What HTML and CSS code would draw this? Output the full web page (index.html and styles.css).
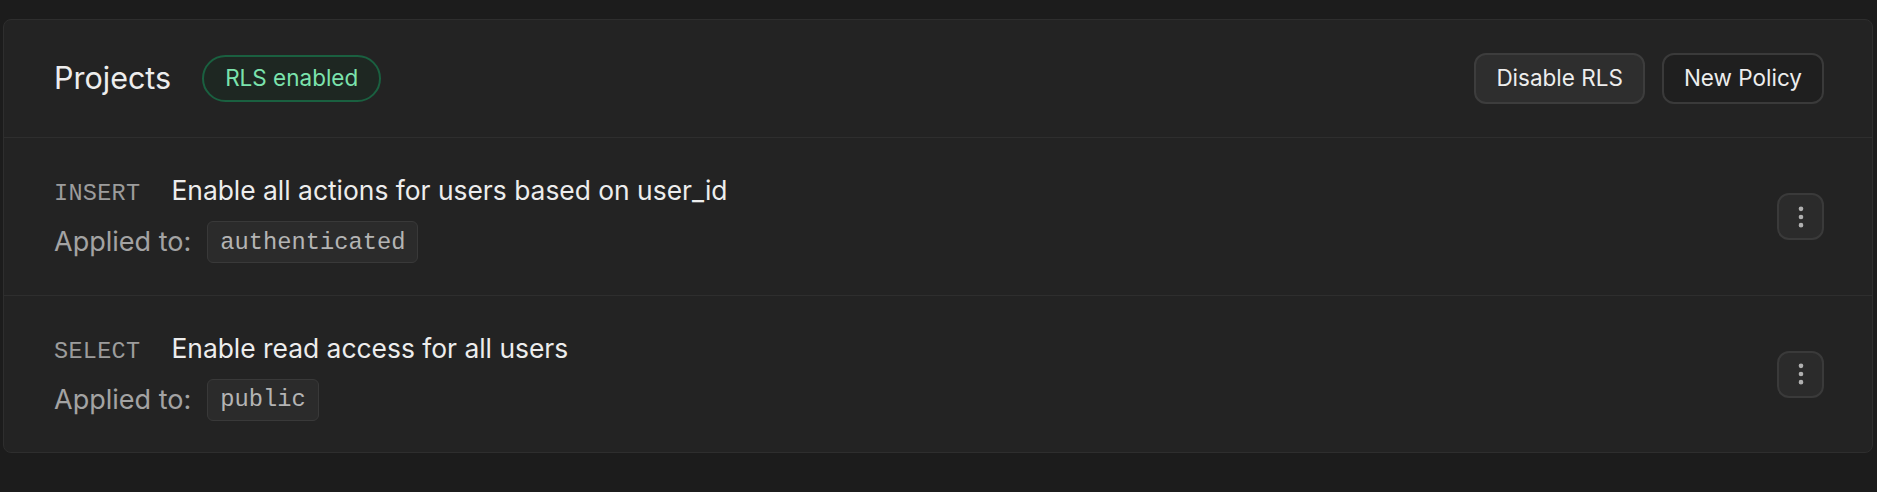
FILE: index.html
```html
<!DOCTYPE html>
<html lang="en">
<head>
<meta charset="utf-8">
<title>Projects policies</title>
<link rel="stylesheet" href="styles.css">
</head>
<body>
<section class="card">
  <header class="card-header">
    <div class="header-left">
      <h2 class="title">Projects</h2>
      <span class="badge">RLS enabled</span>
    </div>
    <div class="header-actions">
      <button class="btn btn-secondary">Disable RLS</button>
      <button class="btn btn-outline">New Policy</button>
    </div>
  </header>

  <div class="policy-row">
    <div class="policy-info">
      <div class="policy-line">
        <span class="method">INSERT</span>
        <span class="policy-name">Enable all actions for users based on user_id</span>
      </div>
      <div class="applied-line">
        <span class="applied-label">Applied to:</span>
        <code class="role-pill">authenticated</code>
      </div>
    </div>
    <button class="icon-btn" aria-label="More actions">
      <svg viewBox="0 0 24 24" width="28" height="28" fill="none" stroke="currentColor" stroke-width="2" stroke-linecap="round" stroke-linejoin="round"><circle cx="12" cy="12" r="1"/><circle cx="12" cy="5" r="1"/><circle cx="12" cy="19" r="1"/></svg>
    </button>
  </div>

  <div class="policy-row">
    <div class="policy-info">
      <div class="policy-line">
        <span class="method">SELECT</span>
        <span class="policy-name">Enable read access for all users</span>
      </div>
      <div class="applied-line">
        <span class="applied-label">Applied to:</span>
        <code class="role-pill">public</code>
      </div>
    </div>
    <button class="icon-btn" aria-label="More actions">
      <svg viewBox="0 0 24 24" width="28" height="28" fill="none" stroke="currentColor" stroke-width="2" stroke-linecap="round" stroke-linejoin="round"><circle cx="12" cy="12" r="1"/><circle cx="12" cy="5" r="1"/><circle cx="12" cy="19" r="1"/></svg>
    </button>
  </div>
</section>
</body>
</html>
```

FILE: styles.css
```css
* {
  box-sizing: border-box;
}

html, body {
  margin: 0;
  background: #1c1c1c;
}

body {
  padding: 19px 4px 0 3px;
  font-family: Inter, "Noto Sans", "Liberation Sans", sans-serif;
  color: #ededed;
}

.card {
  background: #232323;
  border: 1px solid #2e2e2e;
  border-radius: 8px;
}

.card-header {
  height: 118px;
  padding: 0 48px 0 50px;
  display: flex;
  align-items: center;
  justify-content: space-between;
  border-bottom: 1px solid #2e2e2e;
}

.header-left {
  display: flex;
  align-items: center;
  gap: 31px;
}

.title {
  margin: 0;
  font-size: 30.5px;
  font-weight: 400;
  color: #ededed;
  line-height: 1.2;
}

.badge {
  display: inline-flex;
  align-items: center;
  height: 47px;
  padding: 0 21px;
  border: 2px solid #1a6040;
  border-radius: 999px;
  background: #1e2722;
  color: #7be3ad;
  font-size: 22.5px;
  line-height: 1;
}

.header-actions {
  display: flex;
  align-items: center;
  gap: 17px;
}

.btn {
  height: 51px;
  padding: 0 20px;
  border-radius: 12px;
  font-family: inherit;
  font-size: 22.5px;
  color: #ededed;
  cursor: pointer;
  line-height: 1;
}

.btn-secondary {
  background: #2e2e2e;
  border: 2px solid #3d3d3d;
}

.btn-outline {
  background: #1f1f1f;
  border: 2px solid #3a3a3a;
}

.policy-row {
  min-height: 157px;
  padding: 0 48px 0 50px;
  display: flex;
  align-items: center;
  justify-content: space-between;
}

.policy-row + .policy-row {
  border-top: 1px solid #2e2e2e;
}

.policy-info {
  display: flex;
  flex-direction: column;
  gap: 9px;
  margin-top: 2px;
}

.policy-line {
  display: flex;
  align-items: baseline;
  gap: 31px;
  line-height: 36px;
}

.method {
  font-family: "Liberation Mono", "DejaVu Sans Mono", monospace;
  font-size: 23.5px;
  color: #9c9c9c;
  letter-spacing: 0.3px;
}

.policy-name {
  font-size: 26.4px;
  color: #ededed;
}

.applied-line {
  display: flex;
  align-items: center;
  gap: 16px;
}

.applied-label {
  font-size: 27px;
  color: #a3a3a3;
  line-height: 36px;
}

.role-pill {
  display: inline-flex;
  align-items: center;
  height: 42px;
  padding: 0 12px;
  border: 1px solid #393939;
  border-radius: 6px;
  background: #2b2b2b;
  font-family: "Liberation Mono", "DejaVu Sans Mono", monospace;
  font-size: 23.75px;
  color: #b4b4b4;
}

.icon-btn {
  width: 47px;
  height: 47px;
  padding: 0;
  display: flex;
  align-items: center;
  justify-content: center;
  background: #2b2b2b;
  border: 2px solid #3a3a3a;
  border-radius: 12px;
  color: #b0b0b0;
  cursor: pointer;
}
```
